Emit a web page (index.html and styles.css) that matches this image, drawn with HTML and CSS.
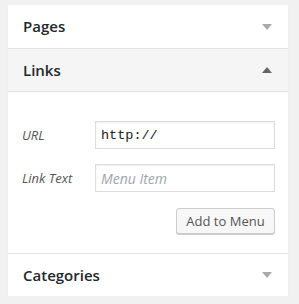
FILE: index.html
```html
<!DOCTYPE html>
<html>
<head>
    <meta charset="utf-8">
    <title>Menu Items</title>
    <link rel="stylesheet" href="styles.css">
</head>
<body>
    <div class="box">
        <div class="section">
            <h3 class="title">Pages<span class="arrow down"></span></h3>
        </div>
        <div class="section open">
            <h3 class="title">Links<span class="arrow up"></span></h3>
            <div class="content">
                <div class="row">
                    <label>URL</label>
                    <input type="text" class="code" value="http://">
                </div>
                <div class="row">
                    <label>Link Text</label>
                    <input type="text" placeholder="Menu Item">
                </div>
                <div class="actions">
                    <button class="btn">Add to Menu</button>
                </div>
            </div>
        </div>
        <div class="section">
            <h3 class="title">Categories<span class="arrow down"></span></h3>
        </div>
    </div>
</body>
</html>
```

FILE: styles.css
```css
*{margin:0;padding:0;box-sizing:border-box;}
body{background:#f1f1f1;font-family:"Open Sans","Noto Sans",sans-serif;color:#444;padding:5px 11px 0 8px;}
.box{
    width:280px;
    background:#fff;
    box-shadow:0 1px 1px rgba(0,0,0,.06);
}
.section{border-bottom:1px solid #e3e3e3;}
.section:last-child{border-bottom:0;}
.title{
    display:flex;
    justify-content:space-between;
    align-items:center;
    font-size:15px;
    font-weight:600;
    line-height:21px;
    color:#23282d;
    padding:11px 15px 11px 15px;
    height:43px;
}
.section:last-child .title{height:42px;}
.open .title{background:#f5f5f5;border-bottom:1px solid #e3e3e3;}
.arrow{width:0;height:0;border-left:5px solid transparent;border-right:5px solid transparent;margin-right:1px;}
.arrow.down{border-top:6px solid #aaa;}
.arrow.up{border-bottom:6px solid #666;}
.content{padding:29px 13px 19px 14px;display:flex;flex-direction:column;gap:15px;}
.row{display:flex;align-items:center;}
.row label{width:73px;font-size:13px;font-style:italic;color:#555;}
.row input{
    width:180px;
    height:28px;
    border:1px solid #ddd;
    box-shadow:inset 0 1px 2px rgba(0,0,0,.07);
    padding:0 5px;
    font-family:"Open Sans","Noto Sans",sans-serif;
    font-size:14px;
    color:#333;
    outline:none;
}
.row input.code{font-family:"Liberation Mono","DejaVu Sans Mono",monospace;font-size:13.5px;color:#222;}
.row input::placeholder{color:#a0a5aa;font-style:italic;}
.actions{display:flex;justify-content:flex-end;margin-top:1px;}
.btn{
    height:26px;
    width:99px;
    border:1px solid #ccc;
    border-radius:3px;
    background:#f7f7f7;
    box-shadow:0 1px 0 #ccc;
    font-family:"Open Sans","Noto Sans",sans-serif;
    font-size:13px;
    color:#555;
}
```
